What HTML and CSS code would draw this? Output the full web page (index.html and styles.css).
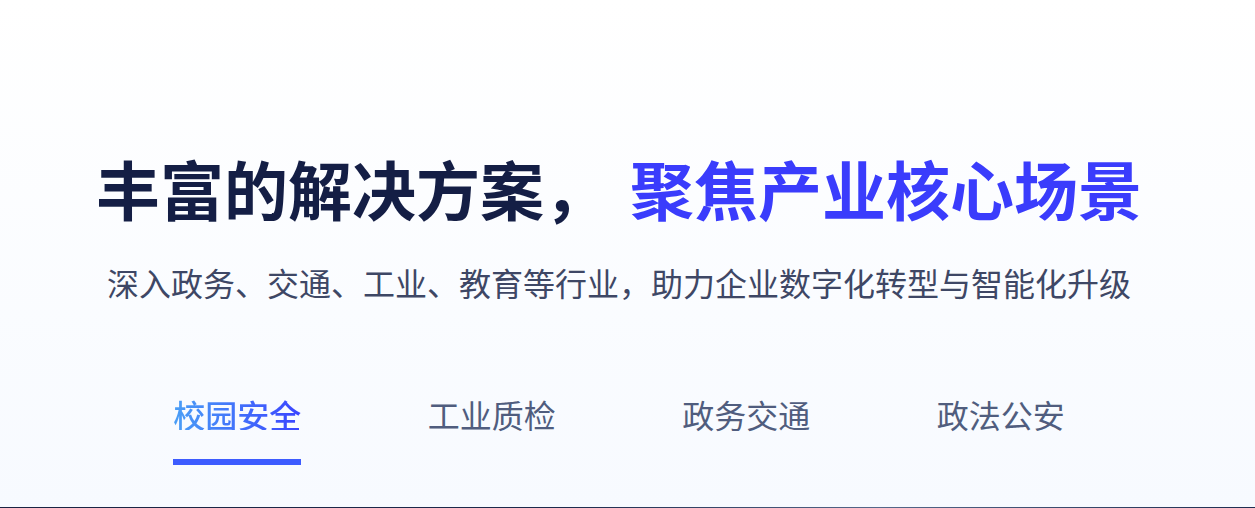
FILE: index.html
```html
<!DOCTYPE html>
<html lang="zh-CN">
<head>
<meta charset="utf-8">
<title>解决方案</title>
<link rel="stylesheet" href="styles.css">
</head>
<body>
<section class="solutions">
  <div class="inner">
    <h1 class="title">丰富的解决方案，<span class="title-accent">聚焦产业核心场景</span></h1>
    <p class="subtitle">深入政务、交通、工业、教育等行业，助力企业数字化转型与智能化升级</p>
    <nav class="tabs">
      <div class="tab tab-active"><span class="tab-label">校园安全</span><span class="tab-bar"></span></div>
      <div class="tab"><span class="tab-label">工业质检</span></div>
      <div class="tab"><span class="tab-label">政务交通</span></div>
      <div class="tab"><span class="tab-label">政法公安</span></div>
    </nav>
  </div>
</section>
<div class="image-edge"></div>
</body>
</html>
```

FILE: styles.css
```css
html, body {
  margin: 0;
  padding: 0;
  background: #f7faff;
  overflow: hidden;
}

body {
  font-family: "Noto Sans CJK SC", "Noto Sans", sans-serif;
}

.solutions {
  height: 507px;
  box-sizing: border-box;
  padding-top: 155px;
  background: linear-gradient(180deg, #ffffff 0%, #f7faff 100%);
}

.inner {
  width: 1238px;
  display: flex;
  flex-direction: column;
  align-items: center;
}

.title {
  margin: 0;
  font-size: 64px;
  line-height: 64px;
  font-weight: 700;
  color: #141e45;
  white-space: nowrap;
}

.title-accent {
  margin-left: 22px;
  color: #3a3cfc;
}

.subtitle {
  margin: 47px 0 0;
  font-size: 32px;
  line-height: 32px;
  font-weight: 400;
  color: #3e4765;
  white-space: nowrap;
}

.tabs {
  margin-top: 100px;
  display: flex;
  gap: 126.5px;
}

.tab {
  display: flex;
  flex-direction: column;
  align-items: center;
  width: 128px;
}

.tab-label {
  font-size: 32px;
  line-height: 32px;
  font-weight: 400;
  color: #505d7e;
  white-space: nowrap;
}

.tab-active .tab-label {
  font-weight: 500;
  background: linear-gradient(90deg, #4a9ff6 0%, #3a44ff 100%);
  -webkit-background-clip: text;
  background-clip: text;
  color: transparent;
}

.tab-bar {
  margin-top: 29px;
  width: 128px;
  height: 6px;
  background: #3d5cff;
}

.image-edge {
  height: 1px;
  background: linear-gradient(90deg, #1a2342 0%, #1d2a4c 45%, #56688a 70%, #1f2d50 100%);
}
```
